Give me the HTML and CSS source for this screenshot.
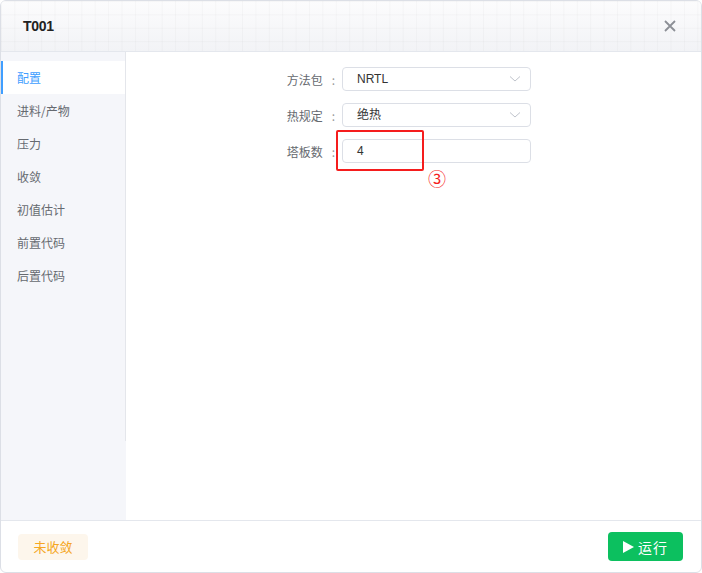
FILE: index.html
```html
<!DOCTYPE html>
<html lang="zh-CN">
<head>
  <meta charset="UTF-8" />
  <title>T001</title>
  <link rel="stylesheet" href="styles.css">
</head>
<body>
  <div class="dialog">
    <div class="header">
      <span class="title">T001</span>
      <span class="close">
        <svg width="12" height="12" viewBox="0 0 12 12"><path d="M1 1 L11 11 M11 1 L1 11" stroke="#8c8f96" stroke-width="1.8" fill="none"/></svg>
      </span>
    </div>
    <div class="body">
      <div class="side">
        <ul class="menu">
          <li class="active">配置</li>
          <li>进料/产物</li>
          <li>压力</li>
          <li>收敛</li>
          <li>初值估计</li>
          <li>前置代码</li>
          <li>后置代码</li>
        </ul>
      </div>
      <div class="main">
        <div class="form">
          <div class="row">
            <label>方法包<span class="colon">:</span></label>
            <div class="control select">NRTL<span class="arrow"><svg width="12" height="8" viewBox="0 0 12 8"><path d="M1 1.5 L6 6 L11 1.5" stroke="#c0c4cc" stroke-width="1" fill="none"/></svg></span></div>
          </div>
          <div class="row">
            <label>热规定<span class="colon">:</span></label>
            <div class="control select">绝热<span class="arrow"><svg width="12" height="8" viewBox="0 0 12 8"><path d="M1 1.5 L6 6 L11 1.5" stroke="#c0c4cc" stroke-width="1" fill="none"/></svg></span></div>
          </div>
          <div class="row">
            <label>塔板数<span class="colon">:</span></label>
            <div class="control">4</div>
          </div>
          <div class="mark"></div>
          <div class="mark-num">③</div>
        </div>
      </div>
    </div>
    <div class="footer">
      <span class="tag">未收敛</span>
      <button class="run-btn" type="button">
        <svg width="11" height="12" viewBox="0 0 11 12"><path d="M0 0 L11 6 L0 12 Z" fill="#fff"/></svg>
        运行
      </button>
    </div>
  </div>
</body>
</html>
```

FILE: styles.css
```css
body { margin: 0; background: #fff; font-family: "Liberation Sans", "Noto Sans CJK SC", sans-serif; }
.dialog {
  width: 700px; height: 571px;
  border: 1px solid #dcdfe6; border-radius: 6px;
  overflow: hidden; display: flex; flex-direction: column;
  background: #fff;
}
.header {
  height: 50px; flex: none;
  border-bottom: 1px solid #e4e7ed;
  display: flex; align-items: center; justify-content: space-between;
  padding: 0 25px 0 22px;
  background-color: #f6f7f9;
  background-image:
    linear-gradient(rgba(0,0,0,0.025) 1px, transparent 1px),
    linear-gradient(90deg, rgba(0,0,0,0.025) 1px, transparent 1px),
    linear-gradient(#fcfcfd, #f2f3f6);
  background-size: 13.4px 13.4px, 13.4px 13.4px, 100% 100%;
}
.title { font-size: 14px; font-weight: bold; color: #222; letter-spacing: -0.3px; }
.close { display: flex; }
.body { flex: 1; display: flex; min-height: 0; }
.side { width: 125px; flex: none; background: #f5f6fa; }
.menu {
  list-style: none; margin: 0; padding: 9px 0 0;
  height: 380px; border-right: 1px solid #e4e6eb;
}
.menu li {
  height: 33px; line-height: 33px;
  padding-left: 16px; font-size: 12px; color: #666a70;
  font-family: "Noto Sans CJK SC", sans-serif;
}
.menu li.active {
  background: #fff; color: #409eff;
  border-left: 2px solid #409eff; padding-left: 14px;
}
.main { flex: 1; background: #fff; }
.form { position: relative; padding: 15px 0 0 146px; }
.row { display: flex; align-items: center; height: 24px; margin-bottom: 12px; }
.row label {
  width: 70px; font-size: 12px; color: #666a70;
  font-family: "Noto Sans CJK SC", sans-serif;
  display: flex; justify-content: flex-end; align-items: center;
}
.colon { margin: 0 7px 0 9px; color: #999; }
.control {
  width: 173px; height: 22px; line-height: 22px;
  border: 1px solid #dcdfe6; border-radius: 4px;
  padding-left: 14px; font-size: 12px; color: #333;
  display: flex; justify-content: space-between; align-items: center;
  font-family: "Liberation Sans", "Noto Sans CJK SC", sans-serif;
}
.arrow { display: flex; padding-right: 9px; }
.mark {
  position: absolute; left: 210px; top: 78px;
  width: 84px; height: 37px;
  border: 2px solid #f51d1d; border-radius: 2px;
}
.mark-num {
  position: absolute; left: 302px; top: 116px;
  font-size: 18px; color: #f51d1d; line-height: 20px;
  font-family: "Noto Sans CJK SC", sans-serif;
}
.footer {
  height: 51px; flex: none;
  border-top: 1px solid #e4e7ed;
  display: flex; align-items: center; justify-content: space-between;
  padding: 0 18px 0 17px;
}
.tag {
  width: 70px; height: 26px; line-height: 26px; text-align: center;
  background: #fdf6ec; color: #f5a623; border-radius: 4px;
  font-size: 13px; font-family: "Noto Sans CJK SC", sans-serif;
}
.run-btn {
  width: 75px; height: 29px; border: none; border-radius: 4px;
  background: #0cc05f; color: #fff; font-size: 14px;
  font-family: "Noto Sans CJK SC", sans-serif;
  display: flex; align-items: center; justify-content: center; gap: 4px;
  padding: 0; letter-spacing: 1px;
}
```
